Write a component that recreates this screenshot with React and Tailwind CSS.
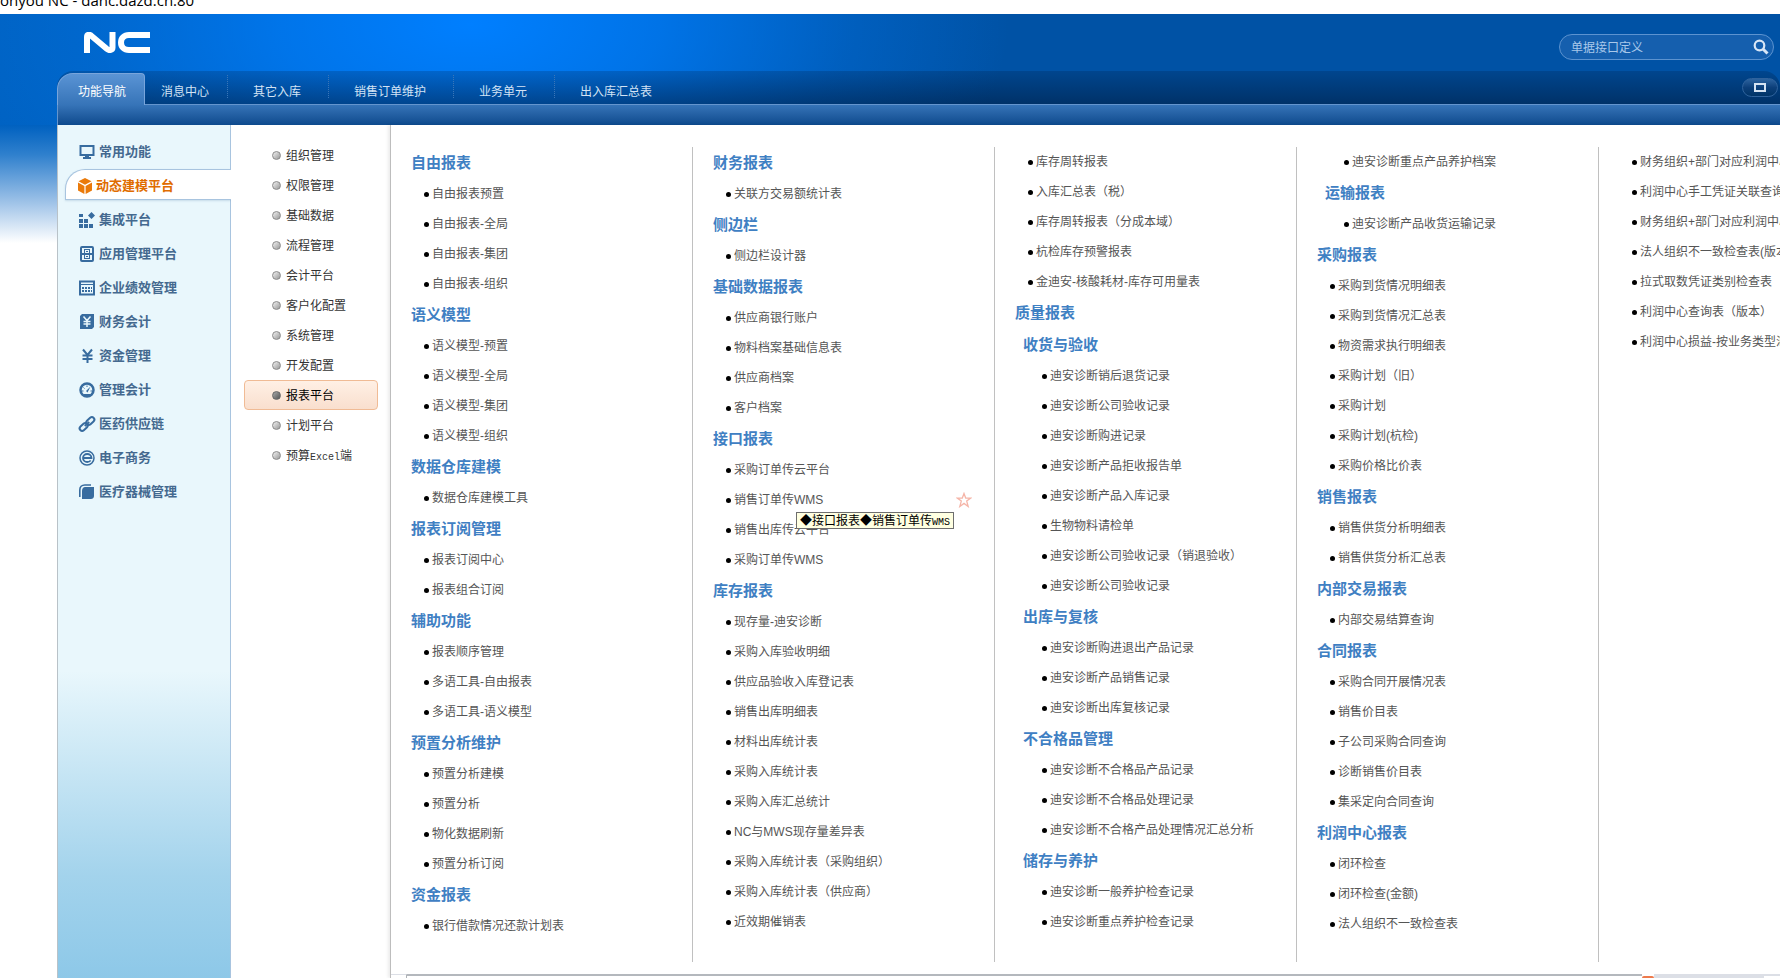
import React, { useState } from "react";
import clsx from "clsx";

const tabs = ["消息中心", "其它入库", "销售订单维护", "业务单元", "出入库汇总表"];

const modules = [
  { name: "常用功能", icon: "monitor" },
  { name: "动态建模平台", icon: "cube" },
  { name: "集成平台", icon: "blocks" },
  { name: "应用管理平台", icon: "cabinet" },
  { name: "企业绩效管理", icon: "sheet" },
  { name: "财务会计", icon: "ledger" },
  { name: "资金管理", icon: "yen" },
  { name: "管理会计", icon: "gauge" },
  { name: "医药供应链", icon: "chain" },
  { name: "电子商务", icon: "ebiz" },
  { name: "医疗器械管理", icon: "leaf" },
];

const menus = [
  "组织管理",
  "权限管理",
  "基础数据",
  "流程管理",
  "会计平台",
  "客户化配置",
  "系统管理",
  "开发配置",
  "报表平台",
  "计划平台",
  "预算Excel端",
];

// deep: nested one level below another group
const columns = [
  [
    { title: "自由报表", items: ["自由报表预置", "自由报表-全局", "自由报表-集团", "自由报表-组织"] },
    { title: "语义模型", items: ["语义模型-预置", "语义模型-全局", "语义模型-集团", "语义模型-组织"] },
    { title: "数据仓库建模", items: ["数据仓库建模工具"] },
    { title: "报表订阅管理", items: ["报表订阅中心", "报表组合订阅"] },
    { title: "辅助功能", items: ["报表顺序管理", "多语工具-自由报表", "多语工具-语义模型"] },
    { title: "预置分析维护", items: ["预置分析建模", "预置分析", "物化数据刷新", "预置分析订阅"] },
    { title: "资金报表", items: ["银行借款情况还款计划表"] },
  ],
  [
    { title: "财务报表", items: ["关联方交易额统计表"] },
    { title: "侧边栏", items: ["侧边栏设计器"] },
    { title: "基础数据报表", items: ["供应商银行账户", "物料档案基础信息表", "供应商档案", "客户档案"] },
    { title: "接口报表", items: ["采购订单传云平台", "销售订单传WMS", "销售出库传云平台", "采购订单传WMS"] },
    {
      title: "库存报表",
      items: [
        "现存量-迪安诊断",
        "采购入库验收明细",
        "供应品验收入库登记表",
        "销售出库明细表",
        "材料出库统计表",
        "采购入库统计表",
        "采购入库汇总统计",
        "NC与MWS现存量差异表",
        "采购入库统计表（采购组织）",
        "采购入库统计表（供应商）",
        "近效期催销表",
      ],
    },
  ],
  [
    {
      items: ["库存周转报表", "入库汇总表（税）", "库存周转报表（分成本域）", "杭检库存预警报表", "金迪安-核酸耗材-库存可用量表"],
    },
    { title: "质量报表", items: [] },
    {
      title: "收货与验收",
      deep: true,
      items: [
        "迪安诊断销后退货记录",
        "迪安诊断公司验收记录",
        "迪安诊断购进记录",
        "迪安诊断产品拒收报告单",
        "迪安诊断产品入库记录",
        "生物物料请检单",
        "迪安诊断公司验收记录（销退验收）",
        "迪安诊断公司验收记录",
      ],
    },
    { title: "出库与复核", deep: true, items: ["迪安诊断购进退出产品记录", "迪安诊断产品销售记录", "迪安诊断出库复核记录"] },
    {
      title: "不合格品管理",
      deep: true,
      items: ["迪安诊断不合格品产品记录", "迪安诊断不合格品处理记录", "迪安诊断不合格产品处理情况汇总分析"],
    },
    { title: "储存与养护", deep: true, items: ["迪安诊断一般养护检查记录", "迪安诊断重点养护检查记录"] },
  ],
  [
    { deep: true, items: ["迪安诊断重点产品养护档案"] },
    { title: "运输报表", deep: true, items: ["迪安诊断产品收货运输记录"] },
    {
      title: "采购报表",
      items: [
        "采购到货情况明细表",
        "采购到货情况汇总表",
        "物资需求执行明细表",
        "采购计划（旧）",
        "采购计划",
        "采购计划(杭检)",
        "采购价格比价表",
      ],
    },
    { title: "销售报表", items: ["销售供货分析明细表", "销售供货分析汇总表"] },
    { title: "内部交易报表", items: ["内部交易结算查询"] },
    { title: "合同报表", items: ["采购合同开展情况表", "销售价目表", "子公司采购合同查询", "诊断销售价目表", "集采定向合同查询"] },
    { title: "利润中心报表", items: ["闭环检查", "闭环检查(金额)", "法人组织不一致检查表"] },
  ],
  [
    {
      items: [
        "财务组织+部门对应利润中心",
        "利润中心手工凭证关联查询",
        "财务组织+部门对应利润中心",
        "法人组织不一致检查表(版本)",
        "拉式取数凭证类别检查表",
        "利润中心查询表（版本）",
        "利润中心损益-按业务类型汇总",
      ],
    },
  ],
];

const icons = {
  monitor: (
    <>
      <path d="M1.5 2h13v9h-13z" fill="none" stroke="currentColor" strokeWidth="2" />
      <path d="M6 12h4v1h2v2H4v-2h2z" />
    </>
  ),
  cube: (
    <>
      <path d="M8 0l6.500 3.300L8 6.700 1.500 3.300z" />
      <path d="M1 4.600l6.400 3.300V16L1 12.500z" />
      <path d="M15 4.600L8.600 7.900V16l6.400-3.500z" />
    </>
  ),
  blocks: (
    <path d="M0 2h4v3H0zM0 7h4v4H0zM5 7h4v4H5zM0 12h4v4H0zM5 12h4v4H5zM10 12h4v4h-4zM12.500 0L16 3.500 12.500 7 9 3.500z" />
  ),
  cabinet: (
    <>
      <rect x="2" y="1" width="12" height="14" rx="1" fill="none" stroke="currentColor" strokeWidth="2" />
      <path d="M3 7h10v2H3zM5 3h6v1H5zM5 3h1v4H5zM10 3h1v4h-1zM5 12h6v1H5zM5 9h1v4H5zM10 9h1v4h-1z" />
      <path d="M7 5h2v1H7zM7 10h2v1H7z" />
    </>
  ),
  sheet: (
    <>
      <path d="M1 1.500h14v13H1z" fill="none" stroke="currentColor" strokeWidth="2" />
      <path d="M1 4h14v1H1zM3 7h2v2H3zM6 7h2v2H6zM9 7h2v2H9zM12 7h1v2h-1zM3 10h2v2H3zM6 10h2v2H6zM9 10h2v2H9zM12 10h1v2h-1z" />
    </>
  ),
  ledger: (
    <>
      <path d="M3 0h12v13l-2 2H1V2z" />
      <path d="M4.500 2.500L8 6.500l3.500-4M8 6.500V13M4.500 7.500h7M4.500 10h7" fill="none" stroke="#e9f7fc" strokeWidth="1.500" />
    </>
  ),
  yen: <path d="M4 1.500L8.500 7 13 1.500M8.500 7v8M3.500 7.500h10M3.500 11h10" fill="none" stroke="currentColor" strokeWidth="2" />,
  gauge: (
    <>
      <circle cx="8" cy="8" r="6.500" fill="none" stroke="currentColor" strokeWidth="2.500" />
      <path d="M3 9h1.500M4.500 5.500l1 1M8 3.500V5M11.500 9H13" stroke="currentColor" />
      <path d="M11.500 4.500L7 9l1.500 1.500zM5 12h6v2H5z" />
    </>
  ),
  chain: (
    <g transform="rotate(-42 8 8)" fill="none" stroke="currentColor" strokeWidth="2">
      <rect x="-1" y="5.500" width="9" height="5" rx="2.500" />
      <rect x="8" y="5.500" width="9" height="5" rx="2.500" />
      <path d="M5 8h6" />
    </g>
  ),
  ebiz: (
    <>
      <circle cx="8" cy="8" r="7" fill="none" stroke="currentColor" strokeWidth="1.500" />
      <path d="M4 8h8.500c0-2.500-2-4-4.300-4S4 5.700 4 8s2 4 4.200 4c1.500 0 2.600-.5 3.500-1.500" fill="none" stroke="currentColor" strokeWidth="1.800" />
    </>
  ),
  leaf: (
    <>
      <path d="M6 3h9v9c0 2-1.500 3-3 3H3V7c0-2.500 1.500-4 3-4z" />
      <path d="M.8 13V6c0-3 2-5 5-5H12" fill="none" stroke="currentColor" strokeWidth="1.600" />
    </>
  ),
};

function ModuleIcon({ name }) {
  return (
    <svg viewBox="0 0 16 16" className="w-4 h-4 shrink-0 overflow-visible" fill="currentColor" aria-hidden="true">
      {icons[name]}
    </svg>
  );
}

function Logo() {
  return (
    <svg viewBox="0 0 66 21" className="w-[66px] h-[21px]" role="img" aria-label="NC" fill="none" stroke="#fff">
      <path d="M3 21V5c0-2.500 2-3 4-1.500L23 17c2.500 2 5.500 1 5.500-1.500V0" strokeWidth="6" />
      <path d="M66 3H45c-5 0-8 3-8 7.500s3 7.500 8 7.500h21" strokeWidth="6" />
    </svg>
  );
}

function SearchBox() {
  const [keyword, setKeyword] = useState("");

  return (
    <form
      onSubmit={(e) => e.preventDefault()}
      className="flex items-center w-[215px] h-[26px] mt-5 mr-1.5 pl-[11px] pr-1 rounded-full border border-[#5c93d0] bg-[#155fae]"
    >
      <input
        type="text"
        aria-label="搜索功能"
        placeholder="单据接口定义"
        value={keyword}
        onChange={(e) => setKeyword(e.target.value)}
        className="flex-1 min-w-0 pt-0.5 bg-transparent text-xs text-white placeholder:text-[#a9c8ea] outline-none"
      />
      <button type="submit" aria-label="搜索">
        <svg viewBox="0 0 16 16" className="w-4 h-4" fill="none" stroke="#d8e6f6">
          <circle cx="6.500" cy="6.500" r="4.800" strokeWidth="2.200" />
          <path d="M10 10l4.500 4.500" strokeWidth="3" />
        </svg>
      </button>
    </form>
  );
}

function Header() {
  return (
    <header className="bg-[radial-gradient(ellipse_540px_280px_at_470px_10px,#007fff_0%,rgba(0,127,255,0.7)_35%,rgba(0,127,255,0.25)_70%,rgba(0,127,255,0)_100%),linear-gradient(90deg,#0061c0_0px,#0058b0_600px,#0052a5_1000px)]">
      <div className="flex items-start justify-between h-[57px]">
        <div className="pt-[18px] pl-[84px]">
          <Logo />
        </div>
        <SearchBox />
      </div>

      <div className="ml-[57px]">
        <nav className="flex h-[33px] rounded-t-2xl text-xs bg-linear-to-b from-[rgba(0,20,50,0.2)] to-[rgba(0,10,30,0.45)]">
          <button
            type="button"
            className="relative z-10 w-[88px] h-8 mt-0.5 pt-1 pl-0.5 shrink-0 rounded-tl-2xl rounded-tr-sm border border-b-0 border-[#78a5dc] bg-linear-to-b from-[#5a94d5] to-[#3674b8] text-white"
          >
            功能导航
          </button>
          {tabs.map((tab, i) => (
            <button
              key={tab}
              type="button"
              className={clsx(
                "h-[23px] mt-1 pt-[9px] whitespace-nowrap text-[#d3e3f5]",
                i === 0 ? "pl-4 pr-[18px]" : "pl-[25px] pr-[27px]",
                i < tabs.length - 1 && "border-r border-dotted border-[#3a76b8]"
              )}
            >
              {tab}
            </button>
          ))}
          <button
            type="button"
            aria-label="最大化"
            className="flex items-center justify-center w-9 h-[19px] mt-[7px] ml-auto mr-0.5 rounded-full border border-[#2f629c] bg-linear-to-b from-[#2c639f] via-[#0c3f7a] to-[#003468]"
          >
            <span className="w-3 h-[9px] border-2 border-[#d5e2f1]" />
          </button>
        </nav>
        <div className="h-[21px] border-t border-l border-[#6495ce] bg-linear-to-b from-[#3674b8] to-[#0d4a8d]" />
      </div>
    </header>
  );
}

function Sidebar({ active, onSelect }) {
  return (
    <aside className="w-[174px] shrink-0 pt-2.5 border-x border-l-[#b9c2c8] border-r-[#a8c4df] bg-[linear-gradient(180deg,#e9f7fc_0%,#e9f7fc_64%,#a3d3ec_88%,#8dc8e8_100%)]">
      <ul className="text-[13px] font-bold">
        {modules.map(({ name, icon }) => (
          <li key={name} className="h-[34px]">
            <button
              type="button"
              onClick={() => onSelect(name)}
              className={clsx(
                "flex items-center text-left whitespace-nowrap",
                name === active
                  ? "gap-[3px] w-[166px] h-[31px] ml-[7px] pt-0.5 pl-[11px] rounded-tl-[20px] border border-r-0 border-[#a8c4df] bg-white text-[#e06c00] shadow-[0_1px_2px_rgba(120,160,190,0.3)]"
                  : "gap-1 w-full h-full pl-[21px] text-[#44698f]"
              )}
            >
              <span className={name === active ? "text-[#ea7a0a]" : "text-[#386c9f]"}>
                <ModuleIcon name={icon} />
              </span>
              {name}
            </button>
          </li>
        ))}
      </ul>
    </aside>
  );
}

function MenuLabel({ text }) {
  const parts = text.split(/([A-Za-z]+)/);
  return parts.map((part, i) =>
    /[A-Za-z]/.test(part) ? (
      <span key={i} className="font-['Liberation_Mono',monospace] text-[10px]">
        {part}
      </span>
    ) : (
      part
    )
  );
}

function SubMenu({ active, onSelect }) {
  return (
    <ul className="w-[159px] shrink-0 pt-[15px] pl-[13px] pr-3 bg-white text-xs text-[#333]">
      {menus.map((menu) => (
        <li key={menu}>
          <button
            type="button"
            onClick={() => onSelect(menu)}
            className={clsx(
              "flex items-center gap-[5px] w-full h-[30px] pl-[27px] rounded border whitespace-nowrap",
              menu === active
                ? "border-[#f0bb95] bg-linear-to-b from-[#fff0e5] to-[#f9dfce] text-black"
                : "border-transparent"
            )}
          >
            <span
              className={clsx(
                "w-[9px] h-[9px] rounded-full border",
                menu === active
                  ? "border-[#666] bg-linear-to-br from-[#aaa] to-[#555]"
                  : "border-[#8a8a8a] bg-linear-to-br from-[#f2f2f2] to-[#999]"
              )}
            />
            <span className="pt-0.5">
              <MenuLabel text={menu} />
            </span>
          </button>
        </li>
      ))}
    </ul>
  );
}

function Tooltip({ group, name }) {
  return (
    <div
      role="tooltip"
      className="absolute z-10 left-[103px] top-[27px] h-[17px] px-[3px] border border-[#6e6e6e] bg-[#ffffe1] leading-4 text-black whitespace-nowrap"
    >
      ◆{group}◆<MenuLabel text={name} />
    </div>
  );
}

function FunctionItem({ name, group, deep, hovered }) {
  return (
    <li className={clsx("relative flex items-center justify-between h-[30px] pr-[22px]", deep ? "pl-[47px]" : "pl-[33px]")}>
      <a href="#" className="flex items-center gap-[3px] whitespace-nowrap">
        <span className="w-[5px] h-[5px] rounded-full bg-black" />
        {name}
      </a>
      {hovered && (
        <>
          <button type="button" aria-label="收藏">
            <svg viewBox="0 0 16 16" className="w-4 h-4" fill="none" stroke="#f5b5a8" strokeWidth="1.300">
              <path d="M8 1.500l1.700 4.600h5l-4 3 1.500 5.400L8 11.400l-4.200 3.100 1.500-5.400-4-3h5z" />
            </svg>
          </button>
          <Tooltip group={group} name={name} />
        </>
      )}
    </li>
  );
}

function FunctionColumn({ groups }) {
  return (
    <div className="w-[302px] shrink-0 border-r border-[#c0c0c0]">
      {groups.map((group, i) => (
        <section key={i}>
          {group.title && (
            <h3
              className={clsx(
                "h-8 leading-8 text-[15px] font-bold text-[#3f80c3]",
                group.deep ? "pl-[28px]" : "pl-5"
              )}
            >
              {group.title}
            </h3>
          )}
          <ul>
            {group.items.map((item, j) => (
              <FunctionItem
                key={j}
                name={item}
                group={group.title}
                deep={group.deep}
                hovered={item === "销售订单传WMS"}
              />
            ))}
          </ul>
        </section>
      ))}
    </div>
  );
}

function App() {
  const [module, setModule] = useState("动态建模平台");
  const [menu, setMenu] = useState("报表平台");

  return (
    <div className="flex flex-col h-screen overflow-hidden bg-white font-['Liberation_Sans','Noto_Sans_CJK_SC',sans-serif]">
      <div className="flex items-end h-3.5 pb-[2px] shrink-0 overflow-hidden font-['Open_Sans',sans-serif] text-[15px] leading-6 whitespace-nowrap text-black">
        onyou NC - danc.dazd.cn:80
      </div>
      <Header />

      <div className="flex flex-1 min-h-0">
        <div className="w-[57px] h-[118px] shrink-0 bg-[linear-gradient(180deg,#0061c0_0%,#2f80cd_25%,#8fb9e4_60%,#ffffff_100%)]" />
        <Sidebar active={module} onSelect={setModule} />
        <SubMenu active={menu} onSelect={setMenu} />

        <main className="flex flex-col flex-1 min-w-0 border-l border-[#bdbdbd] shadow-[-2px_0_3px_rgba(0,0,0,0.08)]">
          <div className="flex flex-1 min-h-0 pt-[22px] pb-3 overflow-hidden text-xs text-[#555]">
            {columns.map((groups, i) => (
              <FunctionColumn key={i} groups={groups} />
            ))}
          </div>
          <div className="flex h-1 shrink-0">
            <div className="w-4 border-t border-r border-t-[#dcdfe6] border-r-[#b0b4b8]" />
            <div className="flex-1 border-t-2 border-[#b4b8bd]" />
            <div className="w-3 mt-0.5 rounded-t-full bg-[#ee7a4c]" />
            <div className="w-[110px] bg-[#dcdfe6]" />
            <div className="w-4 border-t-2 border-[#dcdfe6]" />
          </div>
        </main>
      </div>
    </div>
  );
}

export default App;
